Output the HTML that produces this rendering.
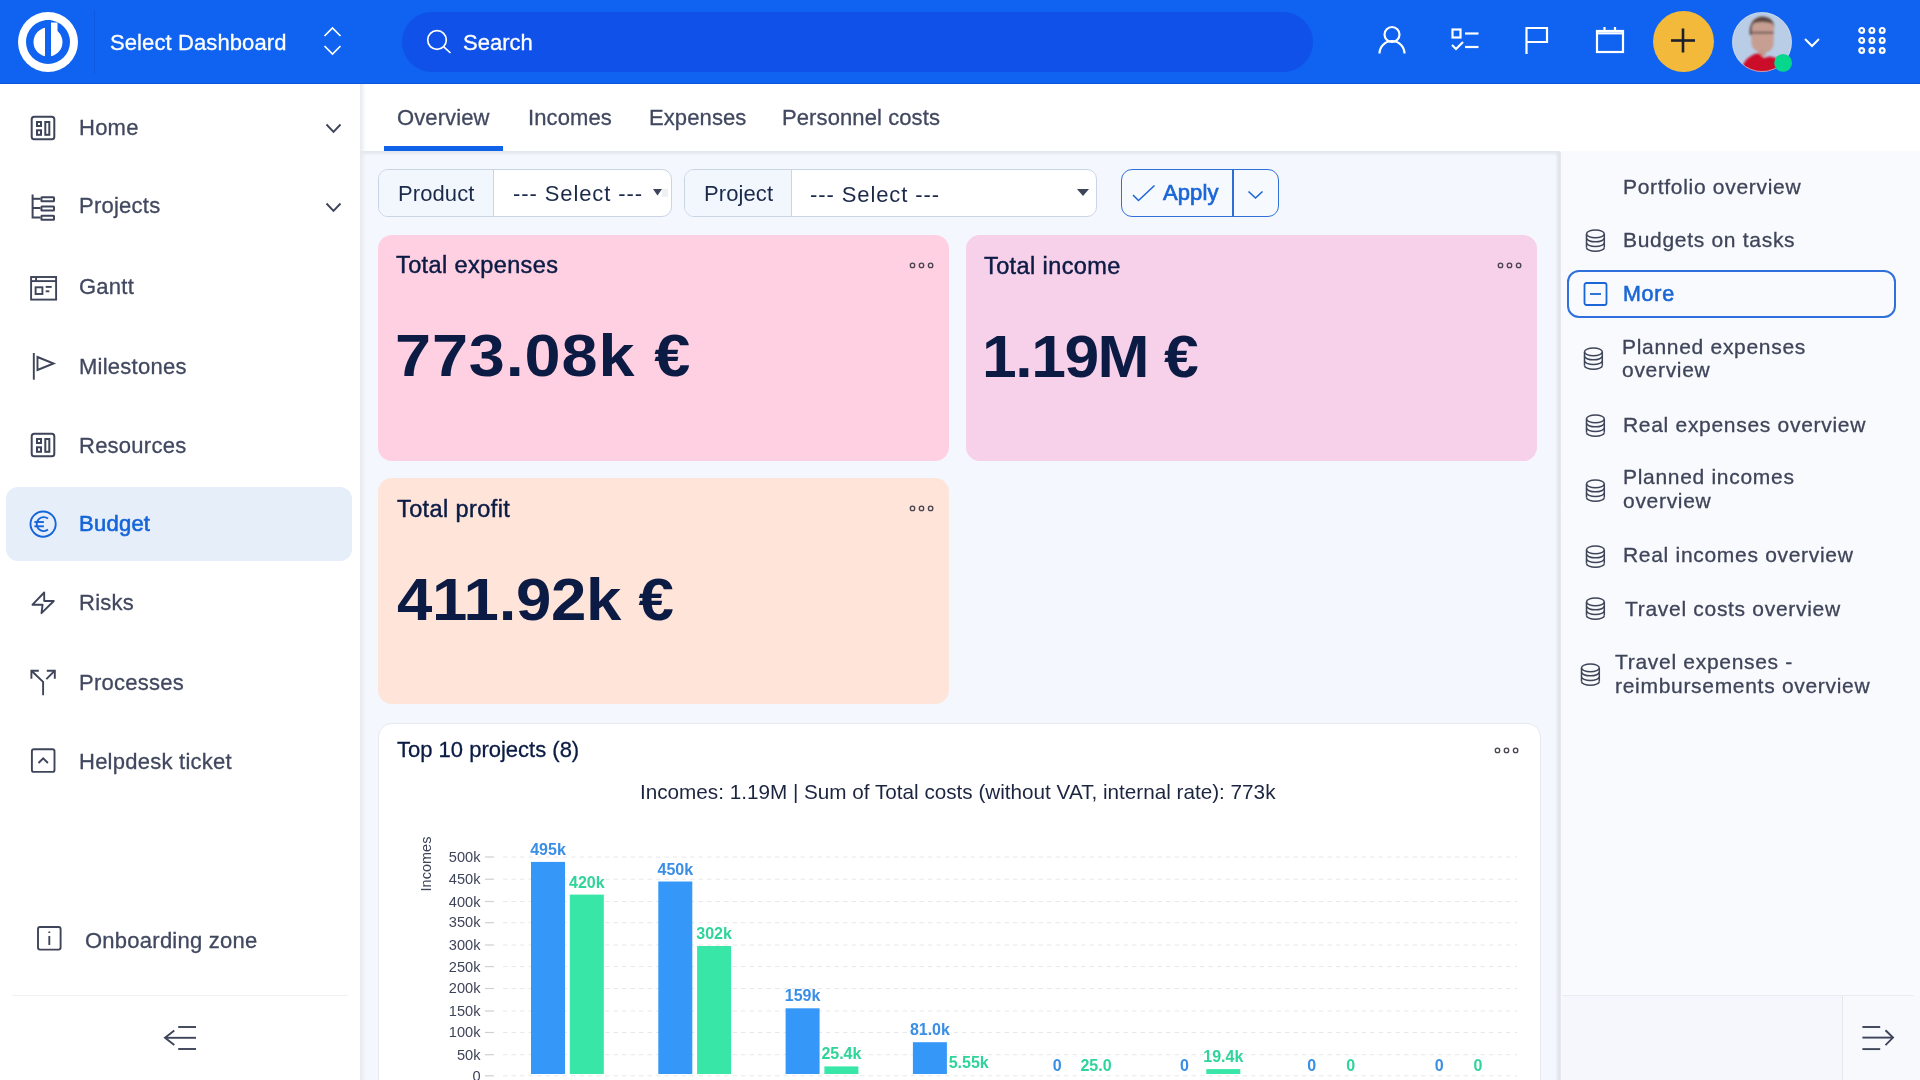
<!DOCTYPE html>
<html><head><meta charset="utf-8">
<style>
*{margin:0;padding:0;box-sizing:border-box}
html,body{width:1920px;height:1080px;overflow:hidden}
body{font-family:"Liberation Sans",sans-serif;background:#F3F6FC;position:relative;color:#3E4459}
.a{position:absolute}
.t{position:absolute;white-space:nowrap;line-height:1;will-change:transform}
svg{position:absolute;overflow:visible;will-change:transform}
#hdr{left:0;top:0;width:1920px;height:84px;background:#0F63F0}
#sb{left:0;top:84px;width:360px;height:996px;background:#FFFFFF}
#tabs{left:360px;top:84px;width:1560px;height:67px;background:#FFFFFF}
#main{left:360px;top:152px;width:1200px;height:928px;background:#F4F7FD}
#rp{left:1561px;top:151px;width:359px;height:929px;background:#F9FAFD}
.nav{font-size:22px;letter-spacing:0.25px;color:#41485F;-webkit-text-stroke:0.3px #41485F}
.rpt{font-size:21px;letter-spacing:0.7px;color:#3E4459;-webkit-text-stroke:0.3px #3E4459}
.card{position:absolute;border-radius:14px}
.tab{font-size:22px;letter-spacing:0.1px;color:#41485F;-webkit-text-stroke:0.3px #41485F}
.flt{font-size:22px;letter-spacing:0px;color:#1C2A4A}
.ctl{font-size:23.5px;letter-spacing:0.4px;color:#0B1B44;-webkit-text-stroke:0.45px #0B1B44}
.val{font-size:60px;font-weight:bold;color:#0B1B44}
.dots{position:absolute}
</style></head><body>
<div id="sb" class="a"></div>
<div id="tabs" class="a"></div>
<div id="main" class="a"></div>
<div id="rp" class="a"></div>
<div class="a" style="left:360px;top:151px;width:1200px;height:1px;background:#E3E7EE"></div>
<div class="a" style="left:360px;top:152px;width:1200px;height:4px;background:linear-gradient(to bottom,rgba(226,230,236,0.9),rgba(240,243,248,0))"></div>
<div class="a" style="left:1555px;top:152px;width:6px;height:928px;background:linear-gradient(to right,rgba(228,232,238,0),#E0E4EA 70%,#E6E9EE)"></div>
<div class="a" style="left:360px;top:84px;width:6px;height:996px;background:linear-gradient(to right,#E6E9EE,rgba(240,243,248,0))"></div>
<!-- HEADER -->
<div id="hdr" class="a"></div>
<div class="a" style="left:94px;top:10px;width:1px;height:64px;background:#0C5AE2"></div>
<div class="a" style="left:0;top:83px;width:1920px;height:1px;background:#0B58DD"></div>
<svg width="96" height="84" style="left:0;top:0">
  <circle cx="48" cy="42" r="30" fill="#fff"/>
  <circle cx="48" cy="42" r="22" fill="#0F63F0"/>
  <circle cx="48" cy="42" r="14.5" fill="#fff"/>
  <rect x="45" y="20" width="6" height="37" fill="#0F63F0"/>
  <rect x="51" y="22.5" width="6.5" height="20" fill="#fff"/>
</svg>
<div class="t" style="left:110px;top:31.5px;letter-spacing:0.1px;font-size:22px;color:#fff;-webkit-text-stroke:0.3px #fff">Select Dashboard</div>
<svg width="20" height="30" style="left:322px;top:26px" fill="none" stroke="#fff" stroke-width="1.7">
  <path d="M2.5 10 L10.5 2 L18.5 10"/><path d="M2.5 20 L10.5 28 L18.5 20"/>
</svg>
<div class="a" style="left:402px;top:12px;width:911px;height:60px;border-radius:30px;background:#1051E9"></div>
<svg width="30" height="30" style="left:425px;top:28px" fill="none" stroke="#fff" stroke-width="1.7">
  <circle cx="12" cy="12" r="9.3"/><path d="M18.8 18.8 L25.5 25"/>
</svg>
<div class="t" style="left:463px;top:32px;font-size:22px;color:#fff;-webkit-text-stroke:0.3px #fff">Search</div>
<!-- header icons -->
<svg width="30" height="30" style="left:1377px;top:26px" fill="none" stroke="#fff" stroke-width="2.2">
  <circle cx="15" cy="8.5" r="7.5"/><path d="M2.5 27.5 A12.5 12.5 0 0 1 27.5 27.5"/>
</svg>
<svg width="30" height="30" style="left:1450px;top:27px" fill="none" stroke="#fff" stroke-width="2.2">
  <rect x="2.5" y="2.5" width="8" height="8"/><path d="M15 6.5 H28.5"/><path d="M15 20 H28.5"/><path d="M2 18 L6 22 L13 15"/>
</svg>
<svg width="30" height="30" style="left:1520px;top:26px" fill="none" stroke="#fff" stroke-width="2.2">
  <path d="M6.5 28 V2 H27 V16 H6.5"/>
</svg>
<svg width="32" height="30" style="left:1594px;top:25px" fill="none" stroke="#fff" stroke-width="2.2">
  <rect x="3" y="6" width="26" height="21"/><path d="M3 8.3 H29"/><path d="M10.5 2 V6"/><path d="M21 2 V6"/>
</svg>
<div class="a" style="left:1653px;top:11px;width:61px;height:61px;border-radius:50%;background:#F2B93A"></div>
<svg width="30" height="30" style="left:1668px;top:26px" fill="none" stroke="#1B1F2E" stroke-width="2.6">
  <path d="M15 2.5 V26.5"/><path d="M3 14.5 H27"/>
</svg>
<svg width="62" height="62" style="left:1731.5px;top:12px">
  <defs><clipPath id="av"><circle cx="30" cy="30" r="29.8"/></clipPath>
  <filter id="bl" x="-20%" y="-20%" width="140%" height="140%"><feGaussianBlur stdDeviation="1.3"/></filter></defs>
  <g clip-path="url(#av)">
    <rect x="-2" y="-2" width="66" height="66" fill="#B9CDE6"/>
    <g filter="url(#bl)">
      <path d="M19 14 Q19 5 30 4.5 Q41 5 42 14 L41.5 33 Q40 40 31 41 Q21 40 19.5 32 Z" fill="#C69E92"/>
      <path d="M17.5 22 Q17 6 30 4.5 Q42 5 42.5 16 L41 12 Q33 8.5 22 11 L20 14 L19.5 24 Z" fill="#5B4A44"/>
      <path d="M19 19.5 H41.5 V22 H19 Z" fill="#6E5650" opacity="0.75"/>
      <path d="M27 38 L33 38 L34 44 L26 44 Z" fill="#C59A8E"/>
      <path d="M8 62 Q11 48 19 44 Q25 40 28 42 L32 46 Q37 43 44 46 Q48 52 48 62 Z" fill="#CC0F2C"/>
    </g>
  </g>
  <circle cx="30" cy="30" r="29.5" fill="none" stroke="#D7E4F5" stroke-width="0.8" opacity="0.7"/>
  <circle cx="51.1" cy="50.9" r="8.9" fill="#05D88C"/>
</svg>
<svg width="18" height="12" style="left:1803px;top:37px" fill="none" stroke="#fff" stroke-width="2">
  <path d="M2 2 L9 9 L16 2"/>
</svg>
<svg width="32" height="32" style="left:1856px;top:24px" fill="none" stroke="#fff" stroke-width="2.2">
  <circle cx="5.7" cy="6.4" r="2.4"/><circle cx="15.9" cy="6.4" r="2.4"/><circle cx="26.2" cy="6.4" r="2.4"/>
  <circle cx="5.7" cy="16.4" r="2.4"/><circle cx="15.9" cy="16.4" r="2.4"/><circle cx="26.2" cy="16.4" r="2.4"/>
  <circle cx="5.7" cy="26.5" r="2.4"/><circle cx="15.9" cy="26.5" r="2.4"/><circle cx="26.2" cy="26.5" r="2.4"/>
</svg>


<!-- SIDEBAR CONTENT -->
<div class="a" style="left:6px;top:487px;width:346px;height:74px;border-radius:12px;background:#E6EEFA"></div>
<svg width="30" height="30" style="left:29px;top:114px" fill="none" stroke="#3E4459" stroke-width="2">
  <rect x="2.7" y="2.7" width="22.6" height="22.6" rx="2.5"/><rect x="8" y="8" width="4" height="4"/><rect x="8" y="16.3" width="4" height="4.5"/><rect x="16.3" y="8" width="4" height="12.8"/>
</svg>
<div class="t nav" style="left:78.5px;top:117.2px">Home</div>
<svg width="20" height="14" style="left:324px;top:122px" fill="none" stroke="#3E4459" stroke-width="1.9"><path d="M2.5 2.5 L9.5 9.8 L16.5 2.5"/></svg>
<svg width="30" height="30" style="left:29px;top:192px" fill="none" stroke="#3E4459" stroke-width="2">
  <path d="M3.6 2.4 V25.5 H11.4"/><path d="M3.6 6.8 H11.4"/><path d="M3.6 16 H11.4"/>
  <rect x="12.4" y="5.3" width="12.6" height="3.9" rx="0.5"/><rect x="12.4" y="14.6" width="12.6" height="3.9" rx="0.5"/><rect x="12.4" y="23.8" width="12.6" height="3.9" rx="0.5"/>
</svg>
<div class="t nav" style="left:78.5px;top:195.1px">Projects</div>
<svg width="20" height="14" style="left:324px;top:201px" fill="none" stroke="#3E4459" stroke-width="1.9"><path d="M2.5 2.5 L9.5 9.8 L16.5 2.5"/></svg>
<svg width="30" height="30" style="left:29px;top:274px" fill="none" stroke="#3E4459" stroke-width="1.9">
  <rect x="2.1" y="3" width="25" height="22.6"/><path d="M2.1 7.1 H27.1"/><path d="M7.1 3 V7.1"/>
  <rect x="6.6" y="13.3" width="6.8" height="6.7"/><path d="M16.7 12.9 H22.7"/><path d="M16.7 17.3 H20.3"/>
</svg>
<div class="t nav" style="left:78.5px;top:276.3px">Gantt</div>
<svg width="30" height="30" style="left:29px;top:351px" fill="none" stroke="#3E4459" stroke-width="1.9">
  <path d="M4.8 2 V28.7"/><path d="M8.5 6 L24.6 12.5 L8.5 19 Z"/>
</svg>
<div class="t nav" style="left:78.5px;top:355.5px">Milestones</div>
<svg width="30" height="30" style="left:29px;top:431px" fill="none" stroke="#3E4459" stroke-width="2">
  <rect x="2.7" y="2.7" width="22.6" height="22.6" rx="2.5"/><rect x="8" y="8" width="4" height="4"/><rect x="8" y="16.3" width="4" height="4.5"/><rect x="16.3" y="8" width="4" height="12.8"/>
</svg>
<div class="t nav" style="left:78.5px;top:434.9px">Resources</div>
<svg width="30" height="30" style="left:28px;top:509px" fill="none" stroke="#1565D8" stroke-width="1.9">
  <circle cx="15.1" cy="15.1" r="12.6"/><path d="M20 9.6 A7 7 0 1 0 20 20.6"/><path d="M6.4 13 H15.9"/><path d="M6.4 17.3 H15.9"/>
</svg>
<div class="t nav" style="left:78.5px;top:513.2px;color:#1565D8;-webkit-text-stroke:0.6px #1565D8">Budget</div>
<svg width="30" height="30" style="left:28px;top:588px" fill="none" stroke="#3E4459" stroke-width="1.9" stroke-linejoin="round">
  <path d="M16.2 4.5 L4.5 16.7 H14.6 L13.5 25.2 L25.8 13 H16.2 Z"/>
</svg>
<div class="t nav" style="left:78.5px;top:591.8px">Risks</div>
<svg width="30" height="30" style="left:28px;top:666px" fill="none" stroke="#3E4459" stroke-width="1.9">
  <path d="M3.4 4.7 L15.1 15.9 V29.2"/><path d="M10.8 4.7 H3.4 V12.7"/><path d="M26.8 4.7 L18.3 13.2"/><path d="M18.8 4.7 H26.8 V12.7"/>
</svg>
<div class="t nav" style="left:78.5px;top:671.6px">Processes</div>
<svg width="30" height="30" style="left:28px;top:745px" fill="none" stroke="#3E4459" stroke-width="1.9">
  <rect x="3.9" y="4.3" width="22.6" height="22.6" rx="2"/><path d="M10.5 18 L15.2 13.3 L19.9 18"/>
</svg>
<div class="t nav" style="left:78.5px;top:750.9px">Helpdesk ticket</div>
<svg width="30" height="30" style="left:34px;top:923px" fill="none" stroke="#3E4459" stroke-width="1.9">
  <rect x="4" y="4" width="22.6" height="22.6" rx="2"/><path d="M15.3 13 V22"/><path d="M15.3 8.5 V10"/>
</svg>
<div class="t nav" style="left:84.5px;top:929.6px">Onboarding zone</div>
<div class="a" style="left:12px;top:995px;width:336px;height:1px;background:#EEF0F3"></div>
<svg width="40" height="30" style="left:160px;top:1023px" fill="none" stroke="#3E4459" stroke-width="1.9">
  <path d="M18.2 4 H36"/><path d="M5 14.8 H36"/><path d="M18.2 26 H36"/><path d="M14.3 7.5 L5 14.8 L14.3 22.1"/>
</svg>
<!-- TABS CONTENT -->
<div class="t tab" style="left:396.5px;top:107.2px">Overview</div>
<div class="t tab" style="left:527.5px;top:107.2px">Incomes</div>
<div class="t tab" style="left:648.5px;top:107.2px">Expenses</div>
<div class="t tab" style="left:781.5px;top:107.2px">Personnel costs</div>
<div class="a" style="left:384px;top:146px;width:119px;height:5px;background:#1062E8"></div>
<!-- FILTERS -->
<div class="a" style="left:378px;top:169px;width:294px;height:48px;border:1px solid #C9D4E4;border-radius:10px;background:#fff;overflow:hidden">
  <div class="a" style="left:0;top:0;width:115px;height:46px;background:#F2F6FD;border-right:1px solid #C9D4E4"></div>
</div>
<div class="t flt" style="left:397.5px;top:182.6px;letter-spacing:0.1px">Product</div>
<div class="t flt" style="left:512.5px;top:182.6px;letter-spacing:0.9px">--- Select ---</div>
<svg width="12" height="10" style="left:652px;top:188px"><path d="M1 1 H10 L5.5 7.5 Z" fill="#3E4459"/></svg>
<div class="a" style="left:662px;top:189px;width:6px;height:8px;background:#EEF0F4"></div>
<div class="a" style="left:684px;top:169px;width:413px;height:48px;border:1px solid #C9D4E4;border-radius:10px;background:#fff;overflow:hidden">
  <div class="a" style="left:0;top:0;width:107px;height:46px;background:#F2F6FD;border-right:1px solid #C9D4E4"></div>
</div>
<div class="t flt" style="left:703.5px;top:182.6px;letter-spacing:0.1px">Project</div>
<div class="t flt" style="left:810px;top:183.6px;letter-spacing:0.9px">--- Select ---</div>
<svg width="14" height="10" style="left:1076px;top:188px"><path d="M1 1 H13 L7 8 Z" fill="#3E4459"/></svg>
<div class="a" style="left:1121px;top:169px;width:158px;height:48px;border:1.8px solid #2F70DA;border-radius:11px;background:#F6F9FE"></div>
<div class="a" style="left:1232px;top:169px;width:2px;height:48px;background:#2C6ED6"></div>
<svg width="26" height="20" style="left:1131px;top:183px" fill="none" stroke="#1A66D6" stroke-width="1.5"><path d="M2 12 L7.5 17.5 L23.5 2.5"/></svg>
<div class="t" style="left:1162.5px;top:181.5px;font-size:22px;color:#1A66D6;-webkit-text-stroke:0.7px #1A66D6;letter-spacing:0.1px">Apply</div>
<svg width="20" height="12" style="left:1246px;top:189px" fill="none" stroke="#1A66D6" stroke-width="1.6"><path d="M2.5 2.5 L9.5 9 L16.5 2.5"/></svg>
<!-- CARDS -->
<div class="card" style="left:378px;top:235px;width:571px;height:226px;background:#FFD0E1"></div>
<div class="card" style="left:966px;top:235px;width:571px;height:226px;background:#F7D0EA"></div>
<div class="card" style="left:378px;top:478px;width:571px;height:226px;background:#FFE4DA"></div>
<div class="t ctl" style="left:396px;top:254.1px">Total expenses</div>
<div class="t ctl" style="left:983.5px;top:255.1px">Total income</div>
<div class="t ctl" style="left:396.5px;top:498.1px">Total profit</div>
<div class="t val" style="left:395px;top:325.5px;letter-spacing:0.8px;transform:scaleX(1.08);transform-origin:0 0">773.08k €</div>
<div class="t val" style="left:982px;top:326.5px;letter-spacing:-1.4px;transform:scaleX(1.04);transform-origin:0 0">1.19M €</div>
<div class="t val" style="left:397px;top:569.5px;letter-spacing:-0.3px;transform:scaleX(1.06);transform-origin:0 0">411.92k €</div>
<svg width="28" height="10" style="left:908px;top:260px" fill="none" stroke="#4B4552" stroke-width="1.35"><circle cx="4.5" cy="5.4" r="2.2"/><circle cx="13.5" cy="5.4" r="2.2"/><circle cx="22.6" cy="5.4" r="2.2"/></svg>
<svg width="28" height="10" style="left:1496px;top:260px" fill="none" stroke="#4B4552" stroke-width="1.35"><circle cx="4.5" cy="5.4" r="2.2"/><circle cx="13.5" cy="5.4" r="2.2"/><circle cx="22.6" cy="5.4" r="2.2"/></svg>
<svg width="28" height="10" style="left:908px;top:503px" fill="none" stroke="#4B4552" stroke-width="1.35"><circle cx="4.5" cy="5.4" r="2.2"/><circle cx="13.5" cy="5.4" r="2.2"/><circle cx="22.6" cy="5.4" r="2.2"/></svg>
<!-- TOP10 CARD -->
<div class="card" style="left:378px;top:723px;width:1163px;height:400px;background:#fff;border:1px solid #E6E9EF"></div>
<!-- RIGHT PANEL CONTENT -->
<div class="t rpt" style="left:1623.0px;top:176.4px;">Portfolio overview</div>
<svg width="32" height="32" style="left:1580px;top:224px" fill="none" stroke="#3E4459" stroke-width="1.5">
  <ellipse cx="15.4" cy="9.9" rx="8.9" ry="3.85"/><path d="M6.5 9.9 V23.4 M24.3 9.9 V23.4"/><path d="M6.5 14 A8.9 3.85 0 0 0 24.3 14"/><path d="M6.5 18.7 A8.9 3.85 0 0 0 24.3 18.7"/><path d="M6.5 23.4 A8.9 3.85 0 0 0 24.3 23.4"/>
</svg>
<div class="t rpt" style="left:1623.0px;top:229.2px;">Budgets on tasks</div>
<div class="a" style="left:1567px;top:270px;width:329px;height:48px;border:2px solid #2F70DD;border-radius:12px;background:#F8FAFE"></div>
<svg width="26" height="26" style="left:1582px;top:281px" fill="none" stroke="#1A66D6" stroke-width="1.8"><rect x="2.5" y="2" width="22" height="22" rx="2"/><path d="M8 13 H19"/></svg>
<div class="t rpt" style="left:1623.0px;top:283.4px;color:#1A66D6;-webkit-text-stroke:0.6px #1A66D6;font-size:21.5px;top:283.5px">More</div>
<svg width="32" height="32" style="left:1578px;top:342px" fill="none" stroke="#3E4459" stroke-width="1.5">
  <ellipse cx="15.4" cy="9.9" rx="8.9" ry="3.85"/><path d="M6.5 9.9 V23.4 M24.3 9.9 V23.4"/><path d="M6.5 14 A8.9 3.85 0 0 0 24.3 14"/><path d="M6.5 18.7 A8.9 3.85 0 0 0 24.3 18.7"/><path d="M6.5 23.4 A8.9 3.85 0 0 0 24.3 23.4"/>
</svg><div class="t rpt" style="left:1621.5px;top:336.3px;">Planned expenses</div><div class="t rpt" style="left:1621.5px;top:359.0px;">overview</div><svg width="32" height="32" style="left:1580px;top:409px" fill="none" stroke="#3E4459" stroke-width="1.5">
  <ellipse cx="15.4" cy="9.9" rx="8.9" ry="3.85"/><path d="M6.5 9.9 V23.4 M24.3 9.9 V23.4"/><path d="M6.5 14 A8.9 3.85 0 0 0 24.3 14"/><path d="M6.5 18.7 A8.9 3.85 0 0 0 24.3 18.7"/><path d="M6.5 23.4 A8.9 3.85 0 0 0 24.3 23.4"/>
</svg><div class="t rpt" style="left:1623.0px;top:414.1px;">Real expenses overview</div><svg width="32" height="32" style="left:1580px;top:474px" fill="none" stroke="#3E4459" stroke-width="1.5">
  <ellipse cx="15.4" cy="9.9" rx="8.9" ry="3.85"/><path d="M6.5 9.9 V23.4 M24.3 9.9 V23.4"/><path d="M6.5 14 A8.9 3.85 0 0 0 24.3 14"/><path d="M6.5 18.7 A8.9 3.85 0 0 0 24.3 18.7"/><path d="M6.5 23.4 A8.9 3.85 0 0 0 24.3 23.4"/>
</svg><div class="t rpt" style="left:1622.5px;top:466.2px;">Planned incomes</div><div class="t rpt" style="left:1622.5px;top:489.8px;">overview</div><svg width="32" height="32" style="left:1580px;top:540px" fill="none" stroke="#3E4459" stroke-width="1.5">
  <ellipse cx="15.4" cy="9.9" rx="8.9" ry="3.85"/><path d="M6.5 9.9 V23.4 M24.3 9.9 V23.4"/><path d="M6.5 14 A8.9 3.85 0 0 0 24.3 14"/><path d="M6.5 18.7 A8.9 3.85 0 0 0 24.3 18.7"/><path d="M6.5 23.4 A8.9 3.85 0 0 0 24.3 23.4"/>
</svg><div class="t rpt" style="left:1623.0px;top:544.0px;">Real incomes overview</div><svg width="32" height="32" style="left:1580px;top:592px" fill="none" stroke="#3E4459" stroke-width="1.5">
  <ellipse cx="15.4" cy="9.9" rx="8.9" ry="3.85"/><path d="M6.5 9.9 V23.4 M24.3 9.9 V23.4"/><path d="M6.5 14 A8.9 3.85 0 0 0 24.3 14"/><path d="M6.5 18.7 A8.9 3.85 0 0 0 24.3 18.7"/><path d="M6.5 23.4 A8.9 3.85 0 0 0 24.3 23.4"/>
</svg><div class="t rpt" style="left:1624.5px;top:597.5px;">Travel costs overview</div><svg width="32" height="32" style="left:1575px;top:658px" fill="none" stroke="#3E4459" stroke-width="1.5">
  <ellipse cx="15.4" cy="9.9" rx="8.9" ry="3.85"/><path d="M6.5 9.9 V23.4 M24.3 9.9 V23.4"/><path d="M6.5 14 A8.9 3.85 0 0 0 24.3 14"/><path d="M6.5 18.7 A8.9 3.85 0 0 0 24.3 18.7"/><path d="M6.5 23.4 A8.9 3.85 0 0 0 24.3 23.4"/>
</svg><div class="t rpt" style="left:1615.0px;top:651.0px;">Travel expenses -</div><div class="t rpt" style="left:1615.0px;top:675.2px;">reimbursements overview</div>
<div class="a" style="left:1562px;top:995px;width:352px;height:1px;background:#E9ECF1"></div>
<div class="a" style="left:1562px;top:996px;width:358px;height:84px;background:#F5F7FC"></div>
<div class="a" style="left:1842px;top:996px;width:1px;height:84px;background:#E3E6EC"></div>
<div class="a" style="left:1843px;top:996px;width:77px;height:84px;background:#F7F9FC"></div>
<svg width="40" height="30" style="left:1858px;top:1023px" fill="none" stroke="#3E4459" stroke-width="1.9">
  <path d="M4.4 4 H22.2"/><path d="M4.4 14.6 H35"/><path d="M4.4 26.1 H22.2"/><path d="M27.5 7.3 L35 14.6 L27.5 22.1"/>
</svg>
<div class="t" style="left:397px;top:738.6px;font-size:22px;color:#0B1B44;-webkit-text-stroke:0.3px #0B1B44">Top 10 projects (8)</div>
<div class="t" style="left:640px;top:781.9px;font-size:20.7px;color:#1C2540">Incomes: 1.19M | Sum of Total costs (without VAT, internal rate): 773k</div>
<svg width="28" height="10" style="left:1493px;top:745px" fill="none" stroke="#4B4552" stroke-width="1.35"><circle cx="4.5" cy="5.4" r="2.2"/><circle cx="13.5" cy="5.4" r="2.2"/><circle cx="22.6" cy="5.4" r="2.2"/></svg>
<svg width="1920" height="1080" style="left:0;top:0">
<path d="M503 857 H1517" stroke="#E8E8E8" stroke-width="1" stroke-dasharray="4.5 4"/>
<path d="M485 857 H494" stroke="#CFCFD4" stroke-width="1.2"/>
<text x="480.5" y="861.7" text-anchor="end" font-family="Liberation Sans" font-size="14.6" fill="#3E4459">500k</text>
<path d="M503 879.2 H1517" stroke="#E8E8E8" stroke-width="1" stroke-dasharray="4.5 4"/>
<path d="M485 879.2 H494" stroke="#CFCFD4" stroke-width="1.2"/>
<text x="480.5" y="884" text-anchor="end" font-family="Liberation Sans" font-size="14.6" fill="#3E4459">450k</text>
<path d="M503 901.5 H1517" stroke="#E8E8E8" stroke-width="1" stroke-dasharray="4.5 4"/>
<path d="M485 901.5 H494" stroke="#CFCFD4" stroke-width="1.2"/>
<text x="480.5" y="906.7" text-anchor="end" font-family="Liberation Sans" font-size="14.6" fill="#3E4459">400k</text>
<path d="M503 922.7 H1517" stroke="#E8E8E8" stroke-width="1" stroke-dasharray="4.5 4"/>
<path d="M485 922.7 H494" stroke="#CFCFD4" stroke-width="1.2"/>
<text x="480.5" y="927.4" text-anchor="end" font-family="Liberation Sans" font-size="14.6" fill="#3E4459">350k</text>
<path d="M503 945 H1517" stroke="#E8E8E8" stroke-width="1" stroke-dasharray="4.5 4"/>
<path d="M485 945 H494" stroke="#CFCFD4" stroke-width="1.2"/>
<text x="480.5" y="950.1" text-anchor="end" font-family="Liberation Sans" font-size="14.6" fill="#3E4459">300k</text>
<path d="M503 966.6 H1517" stroke="#E8E8E8" stroke-width="1" stroke-dasharray="4.5 4"/>
<path d="M485 966.6 H494" stroke="#CFCFD4" stroke-width="1.2"/>
<text x="480.5" y="971.5" text-anchor="end" font-family="Liberation Sans" font-size="14.6" fill="#3E4459">250k</text>
<path d="M503 988.5 H1517" stroke="#E8E8E8" stroke-width="1" stroke-dasharray="4.5 4"/>
<path d="M485 988.5 H494" stroke="#CFCFD4" stroke-width="1.2"/>
<text x="480.5" y="993.4" text-anchor="end" font-family="Liberation Sans" font-size="14.6" fill="#3E4459">200k</text>
<path d="M503 1011 H1517" stroke="#E8E8E8" stroke-width="1" stroke-dasharray="4.5 4"/>
<path d="M485 1011 H494" stroke="#CFCFD4" stroke-width="1.2"/>
<text x="480.5" y="1015.8" text-anchor="end" font-family="Liberation Sans" font-size="14.6" fill="#3E4459">150k</text>
<path d="M503 1032.5 H1517" stroke="#E8E8E8" stroke-width="1" stroke-dasharray="4.5 4"/>
<path d="M485 1032.5 H494" stroke="#CFCFD4" stroke-width="1.2"/>
<text x="480.5" y="1036.9" text-anchor="end" font-family="Liberation Sans" font-size="14.6" fill="#3E4459">100k</text>
<path d="M503 1054.7 H1517" stroke="#E8E8E8" stroke-width="1" stroke-dasharray="4.5 4"/>
<path d="M485 1054.7 H494" stroke="#CFCFD4" stroke-width="1.2"/>
<text x="480.5" y="1059.8" text-anchor="end" font-family="Liberation Sans" font-size="14.6" fill="#3E4459">50k</text>
<path d="M503 1075.8 H1517" stroke="#E8E8E8" stroke-width="1" stroke-dasharray="4.5 4"/>
<path d="M485 1075.8 H494" stroke="#CFCFD4" stroke-width="1.2"/>
<text x="480.5" y="1080.5" text-anchor="end" font-family="Liberation Sans" font-size="14.6" fill="#3E4459">0</text>
<text transform="translate(430.5 864) rotate(-90)" text-anchor="middle" font-family="Liberation Sans" font-size="14.5" fill="#3E4459">Incomes</text>
<rect x="531.0" y="861.9" width="34" height="212.1" fill="#3598F8"/>
<text x="548.0" y="854.9" text-anchor="middle" font-family="Liberation Sans" font-weight="bold" font-size="16" fill="#3A8EE6">495k</text>
<rect x="569.8" y="894.6" width="34" height="179.4" fill="#38E6A7"/>
<text x="586.8" y="887.6" text-anchor="middle" font-family="Liberation Sans" font-weight="bold" font-size="16" fill="#2FD49A">420k</text>
<rect x="658.3" y="881.5" width="34" height="192.5" fill="#3598F8"/>
<text x="675.3" y="874.5" text-anchor="middle" font-family="Liberation Sans" font-weight="bold" font-size="16" fill="#3A8EE6">450k</text>
<rect x="697.1" y="946.0" width="34" height="128.0" fill="#38E6A7"/>
<text x="714.1" y="939.0" text-anchor="middle" font-family="Liberation Sans" font-weight="bold" font-size="16" fill="#2FD49A">302k</text>
<rect x="785.6" y="1008.3" width="34" height="65.7" fill="#3598F8"/>
<text x="802.6" y="1001.3" text-anchor="middle" font-family="Liberation Sans" font-weight="bold" font-size="16" fill="#3A8EE6">159k</text>
<rect x="824.4" y="1066.4" width="34" height="7.6" fill="#38E6A7"/>
<text x="841.4" y="1059.4" text-anchor="middle" font-family="Liberation Sans" font-weight="bold" font-size="16" fill="#2FD49A">25.4k</text>
<rect x="912.9" y="1042.2" width="34" height="31.8" fill="#3598F8"/>
<text x="929.9" y="1035.2" text-anchor="middle" font-family="Liberation Sans" font-weight="bold" font-size="16" fill="#3A8EE6">81.0k</text>
<rect x="951.7" y="1075.1" width="34" height="-1.1" fill="#38E6A7"/>
<text x="968.7" y="1068.1" text-anchor="middle" font-family="Liberation Sans" font-weight="bold" font-size="16" fill="#2FD49A">5.55k</text>
<text x="1057.2" y="1070.5" text-anchor="middle" font-family="Liberation Sans" font-weight="bold" font-size="16" fill="#3A8EE6">0</text>
<rect x="1079.0" y="1077.5" width="34" height="-3.5" fill="#38E6A7"/>
<text x="1096.0" y="1070.5" text-anchor="middle" font-family="Liberation Sans" font-weight="bold" font-size="16" fill="#2FD49A">25.0</text>
<text x="1184.5" y="1070.5" text-anchor="middle" font-family="Liberation Sans" font-weight="bold" font-size="16" fill="#3A8EE6">0</text>
<rect x="1206.3" y="1069.1" width="34" height="4.9" fill="#38E6A7"/>
<text x="1223.3" y="1062.1" text-anchor="middle" font-family="Liberation Sans" font-weight="bold" font-size="16" fill="#2FD49A">19.4k</text>
<text x="1311.8" y="1070.5" text-anchor="middle" font-family="Liberation Sans" font-weight="bold" font-size="16" fill="#3A8EE6">0</text>
<text x="1350.6" y="1070.5" text-anchor="middle" font-family="Liberation Sans" font-weight="bold" font-size="16" fill="#2FD49A">0</text>
<text x="1439.1" y="1070.5" text-anchor="middle" font-family="Liberation Sans" font-weight="bold" font-size="16" fill="#3A8EE6">0</text>
<text x="1477.9" y="1070.5" text-anchor="middle" font-family="Liberation Sans" font-weight="bold" font-size="16" fill="#2FD49A">0</text>
</svg>
<!--END-->
</body></html>
